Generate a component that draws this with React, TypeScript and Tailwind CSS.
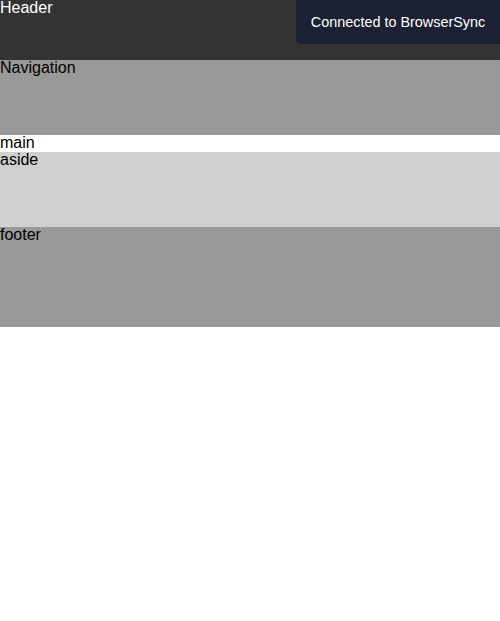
export default function App() {
  return (
    <div className="relative min-h-[621px] bg-white font-['Liberation_Sans',Arial,sans-serif] text-base leading-[16px] text-black">
      <header className="h-[60px] bg-[#333333] text-white">Header</header>
      <nav className="h-[75px] bg-[#999999]">Navigation</nav>
      <main className="h-[17px] bg-white">main</main>
      <aside className="h-[75px] bg-[#d0d0d0]">aside</aside>
      <footer className="h-[100px] bg-[#999999]">footer</footer>

      <div className="absolute right-0 top-0 flex h-[44px] w-[204px] items-center justify-center rounded-bl-[5px] bg-[#1b2032] text-[14.4px] leading-[17px] text-white">
        Connected to BrowserSync
      </div>
    </div>
  );
}
